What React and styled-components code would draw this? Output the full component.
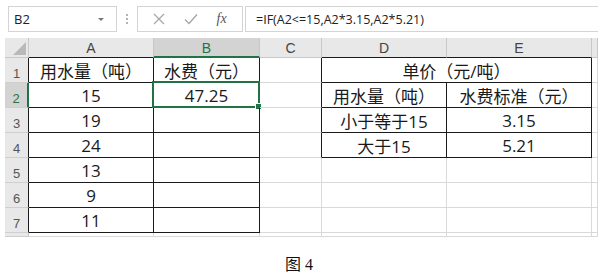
import React from 'react';
import styled, { createGlobalStyle } from 'styled-components';

const GREEN = '#217346';
const GRID = '#d9d9d9';
const INK = '#1a1a1a';

const GlobalStyle = createGlobalStyle`
  body {
    margin: 0;
    background: #fff;
    font-family: "Open Sans", "Noto Sans CJK SC", sans-serif;
  }
`;

const Page = styled.div`
  width: 598px;
  height: 274px;
  overflow: hidden;
  background: #fff;
`;

const Toolbar = styled.div`
  display: flex;
  align-items: stretch;
  height: 26px;
  padding: 6px 0 0 8px;
`;

const NameBox = styled.div`
  width: 109px;
  box-sizing: border-box;
  border: 1px solid #d4d4d4;
  display: flex;
  align-items: center;
  justify-content: space-between;
  padding: 0 12px 0 5px;
  font-size: 13px;
  color: #222;
`;

const Caret = styled.span`
  width: 0;
  height: 0;
  border-left: 3px solid transparent;
  border-right: 3px solid transparent;
  border-top: 3px solid #777;
`;

const Grip = styled.div`
  width: 20px;
  display: flex;
  flex-direction: column;
  align-items: center;
  justify-content: center;
  gap: 2px;

  span {
    width: 2px;
    height: 2px;
    background: #b5b5b5;
  }
`;

const FuncBox = styled.div`
  width: 106px;
  box-sizing: border-box;
  border: 1px solid #d4d4d4;
  display: flex;
  align-items: center;
  justify-content: space-around;
  padding: 0 6px;
`;

const Fx = styled.span`
  font-family: "Liberation Serif", serif;
  font-style: italic;
  font-size: 14px;
  color: #555;
`;

const FormulaBox = styled.div`
  flex: 1;
  margin-left: 2px;
  box-sizing: border-box;
  border: 1px solid #d4d4d4;
  border-right: none;
  display: flex;
  align-items: center;
  padding-left: 10px;
  font-size: 12.5px;
  color: #222;
  white-space: nowrap;
`;

const Sheet = styled.div`
  margin: 6px 0 0 5px;
  display: grid;
  grid-template-columns: 24px 125px 106px 62px 125px 145px 1fr;
  grid-template-rows: 20px repeat(7, 25px) 4px;
`;

const Corner = styled.div`
  background: #e8e8e8;
  border-right: 1px solid #c8c8c8;
  border-bottom: 1px solid #c8c8c8;
  box-sizing: border-box;
  position: relative;

  &::after {
    content: '';
    position: absolute;
    right: 2px;
    bottom: 2px;
    border-left: 13px solid transparent;
    border-bottom: 13px solid #b9b9b9;
  }
`;

const ColHead = styled.div`
  box-sizing: border-box;
  background: ${p => (p.$sel ? '#d3d3d3' : '#e8e8e8')};
  color: ${p => (p.$sel ? GREEN : '#444')};
  border-right: 1px solid #c8c8c8;
  border-bottom: ${p => (p.$sel ? `2px solid ${GREEN}` : `1px solid ${p.$b}`)};
  display: flex;
  align-items: center;
  justify-content: center;
  font-family: "Liberation Sans", sans-serif;
  font-size: 14px;
  padding-top: 1px;
`;

const RowHead = styled.div`
  box-sizing: border-box;
  background: ${p => (p.$sel ? '#d3d3d3' : '#e8e8e8')};
  color: ${p => (p.$sel ? GREEN : '#555')};
  border-right: ${p => (p.$sel ? `2px solid ${GREEN}` : `1px solid ${p.$r}`)};
  border-bottom: 1px solid #cfcfcf;
  display: flex;
  align-items: flex-end;
  justify-content: center;
  padding-bottom: 1px;
  font-family: "Liberation Sans", sans-serif;
  font-size: 13px;
`;

const Cell = styled.div`
  position: relative;
  box-sizing: border-box;
  grid-column: ${p => (p.$span ? `span ${p.$span}` : 'auto')};
  border-right: 1px solid ${p => p.$r};
  border-bottom: 1px solid ${p => p.$b};
  display: flex;
  align-items: center;
  justify-content: center;
  font-size: 17px;
  color: ${INK};
  white-space: nowrap;
  padding-top: 1px;
`;

const Selection = styled.div`
  position: absolute;
  top: -2px;
  left: -2px;
  right: -1px;
  bottom: -1px;
  border: 2px solid ${GREEN};

  &::after {
    content: '';
    position: absolute;
    right: -4px;
    bottom: -4px;
    width: 5px;
    height: 5px;
    background: ${GREEN};
    border: 1px solid #fff;
  }
`;

const Caption = styled.div`
  margin-top: 14px;
  text-align: center;
  font-family: "Liberation Serif", "Noto Sans CJK SC", serif;
  font-size: 16px;
  color: #111;
`;

// F is only a sliver at the right edge, so its header stays blank
const cols = ['A', 'B', 'C', 'D', 'E', ''];

const rows = [
  ['用水量（吨）', '水费（元）', '', '单价（元/吨）'],
  ['15', '47.25', '', '用水量（吨）', '水费标准（元）'],
  ['19', '', '', '小于等于15', '3.15'],
  ['24', '', '', '大于15', '5.21'],
  ['13'],
  ['9'],
  ['11'],
  [],
];

const inLeft = r => r >= 1 && r <= 7;
const inRight = r => r >= 1 && r <= 4;

function rightColor(r, c) {
  if ((c === 0 || c === 1) && inLeft(r)) return INK;
  if ((c === 2 || c === 3 || c === 4) && inRight(r)) return INK;
  return GRID;
}

function bottomColor(r, c) {
  if ((c === 0 || c === 1) && inLeft(r)) return INK;
  if ((c === 3 || c === 4) && inRight(r)) return INK;
  return GRID;
}

function headBottom(c) {
  if (c === 0 || c === 3 || c === 4) return INK;
  return '#c8c8c8';
}

export default function App() {
  return (
    <Page>
      <GlobalStyle />
      <Toolbar>
        <NameBox>
          B2
          <Caret />
        </NameBox>
        <Grip>
          <span />
          <span />
          <span />
        </Grip>
        <FuncBox>
          <svg width="12" height="12" viewBox="0 0 12 12">
            <path d="M1 1 L11 11 M11 1 L1 11" stroke="#a6a6a6" strokeWidth="1.2" fill="none" />
          </svg>
          <svg width="14" height="12" viewBox="0 0 14 12">
            <path d="M1 6.5 L5 10.5 L13 1.5" stroke="#a6a6a6" strokeWidth="1.3" fill="none" />
          </svg>
          <Fx>fx</Fx>
        </FuncBox>
        <FormulaBox>=IF(A2&lt;=15,A2*3.15,A2*5.21)</FormulaBox>
      </Toolbar>

      <Sheet>
        <Corner />
        {cols.map((c, i) => (
          <ColHead key={i} $sel={c === 'B'} $b={headBottom(i)}>
            {c}
          </ColHead>
        ))}
        {rows.map((row, ri) => {
          const r = ri + 1;
          const cells = [];
          for (let c = 0; c < 6; c++) {
            if (r === 1 && c === 4) continue;
            const span = r === 1 && c === 3 ? 2 : 0;
            const rc = span ? rightColor(r, 4) : rightColor(r, c);
            cells.push(
              <Cell key={c} $span={span} $r={rc} $b={bottomColor(r, c)}>
                {row[c] || ''}
                {r === 2 && c === 1 && <Selection />}
              </Cell>
            );
          }
          return (
            <React.Fragment key={r}>
              <RowHead $sel={r === 2} $r={inLeft(r) ? INK : '#c8c8c8'}>
                {r <= 7 ? r : ''}
              </RowHead>
              {cells}
            </React.Fragment>
          );
        })}
      </Sheet>

      <Caption>图 4</Caption>
    </Page>
  );
}
